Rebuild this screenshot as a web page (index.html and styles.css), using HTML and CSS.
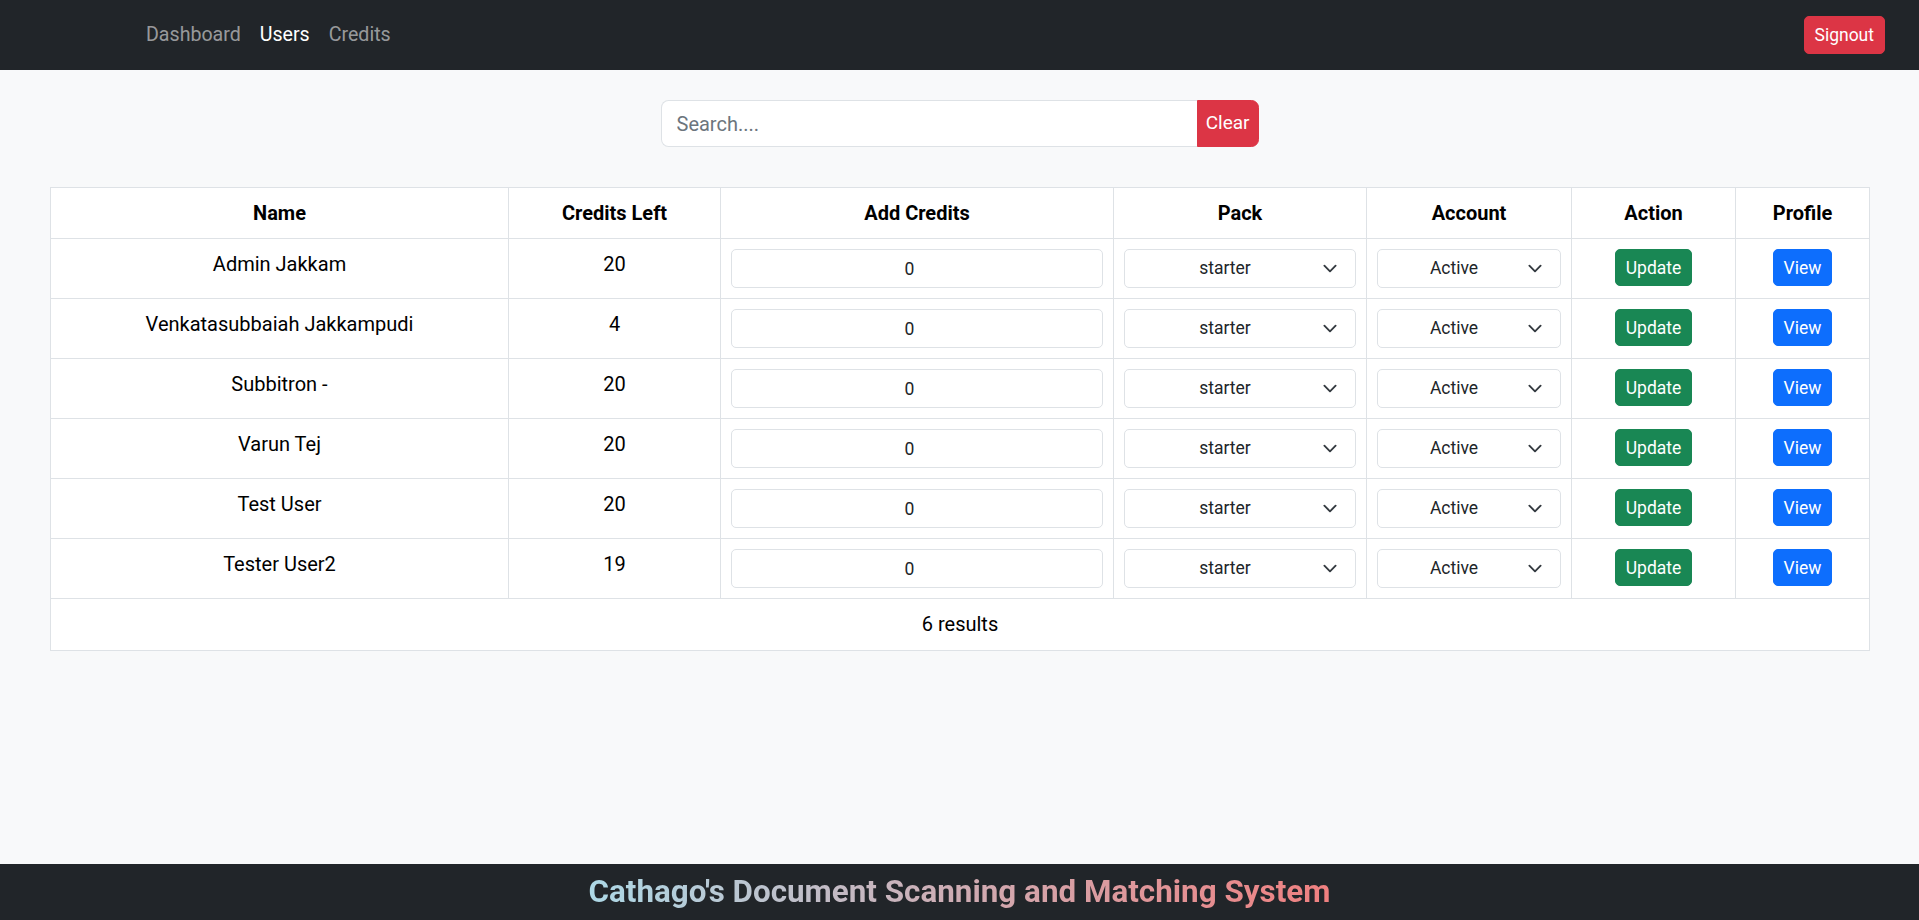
FILE: index.html
```html
<!DOCTYPE html>
<html lang="en">
<head>
<meta charset="utf-8">
<title>Users</title>
<link rel="stylesheet" href="styles.css">
</head>
<body>
<nav class="navbar">
  <ul class="nav-list">
    <li><a class="nav-link" href="#">Dashboard</a></li>
    <li><a class="nav-link active" href="#">Users</a></li>
    <li><a class="nav-link" href="#">Credits</a></li>
  </ul>
  <button class="btn btn-sm btn-danger">Signout</button>
</nav>

<main class="content">
  <div class="search-group">
    <input class="search-input" type="text" placeholder="Search....">
    <button class="btn btn-danger btn-clear">Clear</button>
  </div>

  <table class="users-table">
    <colgroup>
      <col class="c-name"><col class="c-credits"><col class="c-add"><col class="c-pack"><col class="c-account"><col class="c-action"><col class="c-profile">
    </colgroup>
    <thead>
      <tr><th>Name</th><th>Credits Left</th><th>Add Credits</th><th>Pack</th><th>Account</th><th>Action</th><th>Profile</th></tr>
    </thead>
    <tbody>
      <tr>
        <td>Admin Jakkam</td><td>20</td>
        <td><input class="form-control-sm" type="number" value="0"></td>
        <td><select class="form-select-sm"><option>starter</option></select></td>
        <td><select class="form-select-sm"><option>Active</option></select></td>
        <td><button class="btn btn-sm btn-success">Update</button></td>
        <td><button class="btn btn-sm btn-primary">View</button></td>
      </tr>
      <tr>
        <td>Venkatasubbaiah Jakkampudi</td><td>4</td>
        <td><input class="form-control-sm" type="number" value="0"></td>
        <td><select class="form-select-sm"><option>starter</option></select></td>
        <td><select class="form-select-sm"><option>Active</option></select></td>
        <td><button class="btn btn-sm btn-success">Update</button></td>
        <td><button class="btn btn-sm btn-primary">View</button></td>
      </tr>
      <tr>
        <td>Subbitron -</td><td>20</td>
        <td><input class="form-control-sm" type="number" value="0"></td>
        <td><select class="form-select-sm"><option>starter</option></select></td>
        <td><select class="form-select-sm"><option>Active</option></select></td>
        <td><button class="btn btn-sm btn-success">Update</button></td>
        <td><button class="btn btn-sm btn-primary">View</button></td>
      </tr>
      <tr>
        <td>Varun Tej</td><td>20</td>
        <td><input class="form-control-sm" type="number" value="0"></td>
        <td><select class="form-select-sm"><option>starter</option></select></td>
        <td><select class="form-select-sm"><option>Active</option></select></td>
        <td><button class="btn btn-sm btn-success">Update</button></td>
        <td><button class="btn btn-sm btn-primary">View</button></td>
      </tr>
      <tr>
        <td>Test User</td><td>20</td>
        <td><input class="form-control-sm" type="number" value="0"></td>
        <td><select class="form-select-sm"><option>starter</option></select></td>
        <td><select class="form-select-sm"><option>Active</option></select></td>
        <td><button class="btn btn-sm btn-success">Update</button></td>
        <td><button class="btn btn-sm btn-primary">View</button></td>
      </tr>
      <tr>
        <td>Tester User2</td><td>19</td>
        <td><input class="form-control-sm" type="number" value="0"></td>
        <td><select class="form-select-sm"><option>starter</option></select></td>
        <td><select class="form-select-sm"><option>Active</option></select></td>
        <td><button class="btn btn-sm btn-success">Update</button></td>
        <td><button class="btn btn-sm btn-primary">View</button></td>
      </tr>
    </tbody>
    <tfoot>
      <tr><td colspan="7">6 results</td></tr>
    </tfoot>
  </table>
</main>

<footer class="site-footer">
  <span class="footer-title">Cathago's Document Scanning and Matching System</span>
</footer>
</body>
</html>
```

FILE: styles.css
```css
* { box-sizing: border-box; }

html, body { margin: 0; padding: 0; }

body {
  min-height: 100vh;
  display: flex;
  flex-direction: column;
  background: #f8f9fa;
  color: #212529;
  font-family: "Segoe UI", Roboto, "Liberation Sans", sans-serif;
  font-size: 20px;
  line-height: 1.5;
}

/* Navbar */
.navbar {
  height: 70px;
  background: #212529;
  display: flex;
  align-items: center;
  justify-content: space-between;
  padding: 0 34px 0 136px;
}
.nav-list {
  list-style: none;
  margin: 0;
  padding: 0;
  display: flex;
}
.nav-link {
  display: block;
  padding: 10px 9px 10px 10px;
  color: rgba(255, 255, 255, 0.55);
  text-decoration: none;
  font-size: 19.6px;
}
.nav-link.active { color: #fff; }

/* Buttons */
.btn {
  font-family: inherit;
  font-size: 20px;
  line-height: 1.5;
  border: 1px solid transparent;
  border-radius: 7.5px;
  color: #fff;
  padding: 7.5px 15px;
  cursor: pointer;
}
.btn-sm {
  font-size: 17.5px;
  padding: 4.5px 10px;
  border-radius: 5px;
}
.btn-danger { background: #dc3545; border-color: #dc3545; }
.btn-success { background: #198754; border-color: #198754; }
.btn-primary { background: #0d6efd; border-color: #0d6efd; }

/* Search */
.content { flex: 1; }
.search-group {
  display: flex;
  width: 598px;
  margin: 30px auto 40px;
}
.search-input {
  flex: 1;
  min-width: 0;
  font-family: inherit;
  font-size: 20px;
  line-height: 1.5;
  padding: 7.5px 15px;
  border: 1px solid #dee2e6;
  border-right: 0;
  border-radius: 7.5px 0 0 7.5px;
  background: #fff;
  color: #212529;
}
.search-input::placeholder { color: #6c757d; }
.btn-clear {
  padding: 7.5px 8px;
  font-size: 19px;
  border-radius: 0 7.5px 7.5px 0;
}

/* Table */
.users-table {
  width: calc(100% - 100px);
  margin: 0 50px;
  table-layout: fixed;
  border-collapse: collapse;
  background: #fff;
  border: 1px solid #dee2e6;
}
.c-name { width: 458px; }
.c-credits { width: 212px; }
.c-add { width: 393px; }
.c-pack { width: 253px; }
.c-account { width: 205px; }
.c-action { width: 164px; }
.c-profile { width: 134px; }

.users-table th,
.users-table td {
  border: 1px solid #dee2e6;
  padding: 10px;
  text-align: center;
  vertical-align: top;
  font-weight: 400;
}
.users-table th { font-weight: 700; color: #000; }
.users-table td { color: #000; }
.users-table tfoot td { padding: 10px 10px 11px; }

.form-control-sm {
  display: block;
  width: 100%;
  height: 39px;
  font-family: inherit;
  font-size: 17.5px;
  line-height: 1.5;
  padding: 5px 10px;
  border: 1px solid #dee2e6;
  border-radius: 5px;
  background: #fff;
  color: #212529;
  text-align: center;
}

.form-select-sm {
  display: block;
  width: 100%;
  height: 39px;
  font-family: inherit;
  font-size: 17.5px;
  line-height: 1.5;
  padding: 5px 40px 5px 10px;
  border: 1px solid #dee2e6;
  border-radius: 5px;
  color: #212529;
  text-align: center;
  text-align-last: center;
  -webkit-appearance: none;
  appearance: none;
  background-color: #fff;
  background-image: url("data:image/svg+xml,%3csvg xmlns='http://www.w3.org/2000/svg' viewBox='0 0 16 16'%3e%3cpath fill='none' stroke='%23343a40' stroke-linecap='round' stroke-linejoin='round' stroke-width='2' d='m2 5 6 6 6-6'/%3e%3c/svg%3e");
  background-repeat: no-repeat;
  background-position: right 15px center;
  background-size: 20px 15px;
}

/* Footer */
.site-footer {
  height: 56px;
  background: #212529;
  display: flex;
  align-items: center;
  justify-content: center;
}
.footer-title {
  font-size: 31.4px;
  font-weight: 700;
  line-height: 1.2;
  background: linear-gradient(90deg, #add8e6, #f08080);
  -webkit-background-clip: text;
  background-clip: text;
  color: transparent;
}
```
